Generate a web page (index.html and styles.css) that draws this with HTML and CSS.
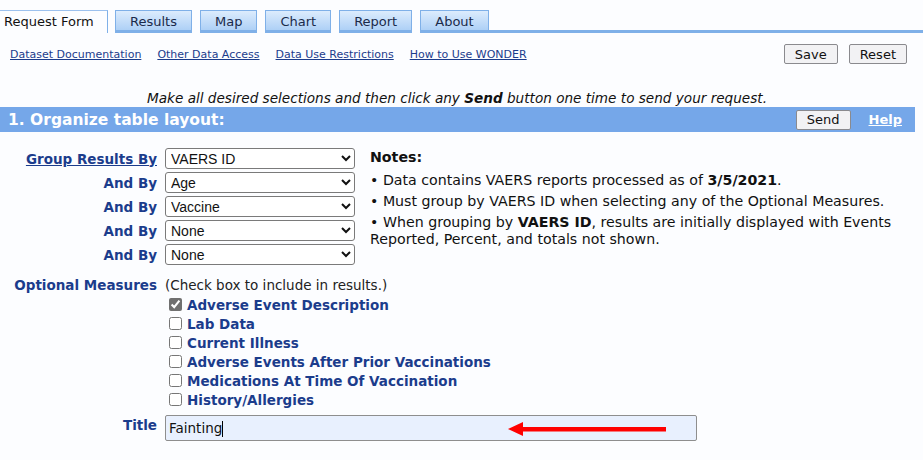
FILE: index.html
```html
<!DOCTYPE html>
<html lang="en">
<head>
  <meta charset="UTF-8" />
  <title>VAERS Request Form</title>
  <link rel="stylesheet" href="styles.css">
</head>
<body>

  <!-- Tabs -->
  <div class="tabs">
    <div class="tab active">Request Form</div>
    <div class="tab">Results</div>
    <div class="tab">Map</div>
    <div class="tab">Chart</div>
    <div class="tab">Report</div>
    <div class="tab">About</div>
    <div class="tab-fill"></div>
  </div>

  <!-- Links and buttons -->
  <div class="toolbar">
    <div class="links">
      <a href="#">Dataset Documentation</a>
      <a href="#">Other Data Access</a>
      <a href="#">Data Use Restrictions</a>
      <a href="#">How to Use WONDER</a>
    </div>
    <div class="actions">
      <button class="btn">Save</button>
      <button class="btn">Reset</button>
    </div>
  </div>

  <p class="hint">Make all desired selections and then click any <b>Send</b> button one time to send your request.</p>

  <div class="section-bar">
    <h2>1. Organize table layout:</h2>
    <div class="bar-actions">
      <button class="btn">Send</button>
      <a href="#" class="help">Help</a>
    </div>
  </div>

  <div class="layout">
    <div class="group-rows">
      <label class="lbl"><a href="#">Group Results By</a></label>
      <select class="sel"><option>VAERS ID</option></select>
      <label class="lbl">And By</label>
      <select class="sel"><option>Age</option></select>
      <label class="lbl">And By</label>
      <select class="sel"><option>Vaccine</option></select>
      <label class="lbl">And By</label>
      <select class="sel"><option>None</option></select>
      <label class="lbl">And By</label>
      <select class="sel"><option>None</option></select>
    </div>

    <div class="notes">
      <div class="notes-head">Notes:</div>
      <p>&bull; Data contains VAERS reports processed as of <b>3/5/2021</b>.</p>
      <p>&bull; Must group by VAERS ID when selecting any of the Optional Measures.</p>
      <p>&bull; When grouping by <b>VAERS ID</b>, results are initially displayed with Events Reported, Percent, and totals not shown.</p>
    </div>
  </div>

  <div class="measures">
    <div class="lbl">Optional Measures</div>
    <div class="measure-list">
      <div class="measure-hint">(Check box to include in results.)</div>
      <label class="check"><input type="checkbox" class="locked" checked> Adverse Event Description</label>
      <label class="check"><input type="checkbox"> Lab Data</label>
      <label class="check"><input type="checkbox"> Current Illness</label>
      <label class="check"><input type="checkbox"> Adverse Events After Prior Vaccinations</label>
      <label class="check"><input type="checkbox"> Medications At Time Of Vaccination</label>
      <label class="check"><input type="checkbox"> History/Allergies</label>
    </div>
  </div>

  <div class="title-row">
    <div class="lbl">Title</div>
    <div class="title-wrap">
      <div class="title-input">Fainting<span class="caret"></span></div>
      <svg class="arrow" width="160" height="16" viewBox="0 0 160 16">
        <polygon points="0,8 15,1 15,15" fill="#ff0000"/>
        <rect x="13" y="6" width="145" height="4.5" fill="#ff0000"/>
      </svg>
    </div>
  </div>

</body>
</html>
```

FILE: styles.css
```css
* {
  box-sizing: border-box;
  margin: 0;
  padding: 0;
}

body {
  font-family: "DejaVu Sans", Verdana, sans-serif;
  font-size: 12px;
  color: #111;
  background: #fcfdff;
  width: 923px;
  height: 460px;
  overflow: hidden;
}

a {
  color: #1b3c8c;
}

/* tabs */
.tabs {
  display: flex;
  align-items: flex-end;
  padding-top: 9px;
  height: 33px;
}

.tab {
  height: 23px;
  padding: 0 14px;
  margin-right: 8px;
  font-size: 13px;
  line-height: 21px;
  color: #1a2a4a;
  background: linear-gradient(#dcecfd, #aed0f6);
  border: 1px solid #7fb0e8;
  border-bottom: 3px solid #7fb0e8;
}

.tab.active {
  padding: 0 4px;
  width: 108px;
  background: #fcfdff;
  border-left: none;
  border-bottom: none;
  border-top: 1px solid #9cc1ee;
  border-right: 1px solid #7fb0e8;
  margin-right: 7px;
  color: #111;
}

.tab-fill {
  flex: 1;
  border-bottom: 3px solid #7fb0e8;
  align-self: stretch;
  margin-left: -8px;
}

/* toolbar */
.toolbar {
  display: flex;
  justify-content: space-between;
  align-items: center;
  padding: 11px 16px 0 10px;
}

.links {
  display: flex;
  gap: 16px;
  font-size: 11px;
}

.actions {
  display: flex;
  gap: 11px;
}

.btn {
  font-family: "DejaVu Sans", Verdana, sans-serif;
  font-size: 13px;
  height: 20px;
  padding: 0 10px;
  background: #f2f2f4;
  border: 1px solid #8a8a8e;
  border-radius: 2px;
  color: #111;
}

.hint {
  text-align: center;
  font-style: italic;
  font-size: 13.6px;
  margin-top: 26px;
  padding-right: 9px;
  line-height: 17px;
}

/* section bar */
.section-bar {
  display: flex;
  justify-content: space-between;
  align-items: center;
  width: 915px;
  height: 25px;
  background: #75a7e9;
  padding: 0 13px 0 8px;
}

.section-bar h2 {
  color: #fff;
  font-size: 15.5px;
  font-weight: bold;
}

.bar-actions {
  display: flex;
  align-items: center;
  gap: 18px;
}

.help {
  color: #fff;
  font-weight: bold;
  font-size: 13px;
}

/* group by */
.layout {
  display: flex;
  gap: 15px;
  margin-top: 16px;
}

.group-rows {
  display: grid;
  grid-template-columns: 157px 190px;
  column-gap: 8px;
  row-gap: 3px;
  align-items: center;
}

.lbl {
  text-align: right;
  font-weight: bold;
  font-size: 13.5px;
  color: #1b3c8c;
}

.lbl a {
  color: #1b3c8c;
}

.sel {
  height: 21px;
  font-family: "Liberation Sans", Arial, sans-serif;
  font-size: 14px;
  border: 1px solid #7a7a7a;
  border-radius: 3px;
  background: #fff;
  color: #111;
  padding-left: 1px;
}

.notes {
  width: 540px;
  font-size: 14.2px;
  line-height: 17px;
  color: #111;
}

.notes-head {
  font-weight: bold;
  margin-top: 1px;
  margin-bottom: 6px;
}

.notes p {
  margin-bottom: 4px;
}

/* optional measures */
.measures {
  display: flex;
  gap: 8px;
  margin-top: 12px;
}

.measures .lbl {
  width: 157px;
}

.measure-list {
  display: flex;
  flex-direction: column;
}

.measure-hint {
  font-size: 13.5px;
  color: #222;
  line-height: 17px;
  margin-bottom: 1px;
}

.check {
  display: flex;
  align-items: center;
  gap: 5px;
  height: 19px;
  padding-left: 4px;
  font-weight: bold;
  font-size: 13.5px;
  color: #1b3c8c;
}

.check input {
  width: 13px;
  height: 13px;
  margin: 0;
}

.check .locked {
  accent-color: #707070;
}

/* title */
.title-row {
  display: flex;
  gap: 8px;
  margin-top: 6px;
}

.title-row .lbl {
  width: 157px;
  padding-top: 2px;
}

.title-wrap {
  position: relative;
}

.title-input {
  width: 532px;
  height: 26px;
  background: #e8f0fe;
  border: 1px solid #8e8e8e;
  border-radius: 2px;
  font-family: "DejaVu Sans", Verdana, sans-serif;
  font-size: 13.5px;
  line-height: 24px;
  padding-left: 3px;
}

.caret {
  display: inline-block;
  width: 1px;
  height: 16px;
  background: #000;
  vertical-align: -4px;
}

.arrow {
  position: absolute;
  left: 343px;
  top: 6px;
}
```
